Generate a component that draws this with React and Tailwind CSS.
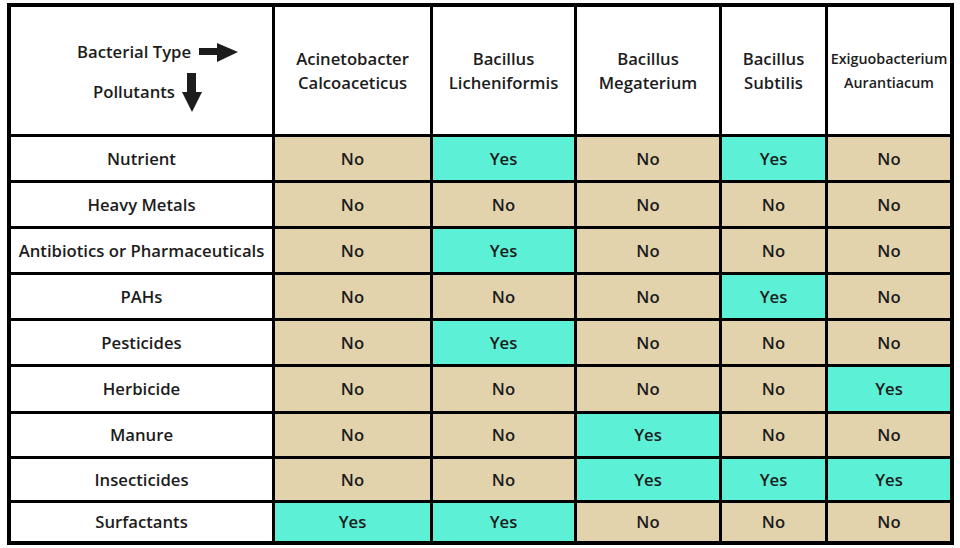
import React from "react";

const cols = [
  ["Acinetobacter", "Calcoaceticus"],
  ["Bacillus", "Licheniformis"],
  ["Bacillus", "Megaterium"],
  ["Bacillus", "Subtilis"],
  ["Exiguobacterium", "Aurantiacum"],
];

const rows = [
  ["Nutrient", [0, 1, 0, 1, 0]],
  ["Heavy Metals", [0, 0, 0, 0, 0]],
  ["Antibiotics or Pharmaceuticals", [0, 1, 0, 0, 0]],
  ["PAHs", [0, 0, 0, 1, 0]],
  ["Pesticides", [0, 1, 0, 0, 0]],
  ["Herbicide", [0, 0, 0, 0, 1]],
  ["Manure", [0, 0, 1, 0, 0]],
  ["Insecticides", [0, 0, 1, 1, 1]],
  ["Surfactants", [1, 1, 0, 0, 0]],
];

function RightArrow() {
  return (
    <svg width="39" height="19" viewBox="0 0 39 19" className="shrink-0">
      <rect x="0" y="5" width="19" height="7" fill="#1c1c1c" />
      <polygon points="18,0 39,9 18,19" fill="#1c1c1c" />
    </svg>
  );
}

function DownArrow() {
  return (
    <svg width="20" height="39" viewBox="0 0 20 39" className="shrink-0">
      <rect x="5" y="0" width="9" height="20" fill="#1c1c1c" />
      <polygon points="0,19 20,19 10,39" fill="#1c1c1c" />
    </svg>
  );
}

export default function App() {
  return (
    <div
      className="w-[960px] h-[548px] bg-white pt-[3px] pl-[7px] text-[#1c1c1c] font-semibold"
      style={{ fontFamily: '"Open Sans", "Noto Sans", sans-serif' }}
    >
      <div className="grid w-[947px] grid-cols-[261px_155px_141px_142px_103px_122px] grid-rows-[127px_43px_43px_43px_43px_43px_44px_42px_41px_38px] gap-[3px] bg-black p-[4px]">
        <div className="bg-white flex flex-col items-start pt-[36px] text-[16.7px] leading-[24px]">
          <div className="flex items-center gap-[8px] ml-[66px] h-[19px]">
            <span className="-mt-[2px]">Bacterial Type</span>
            <RightArrow />
          </div>
          <div className="flex items-start gap-[7px] ml-[82px] mt-[11px]">
            <span className="mt-[7px]">Pollutants</span>
            <DownArrow />
          </div>
        </div>
        {cols.map((c, i) => (
          <div
            key={i}
            className={`bg-white flex flex-col items-center justify-center text-center ${
              i === 4 ? "text-[14.3px] leading-[24px]" : "text-[16.7px] leading-[24px]"
            }`}
          >
            <span>{c[0]}</span>
            <span>{c[1]}</span>
          </div>
        ))}
        {rows.map(([name, vals]) => (
          <React.Fragment key={name}>
            <div className="bg-white flex items-center justify-center text-[16.7px]">{name}</div>
            {vals.map((v, j) => (
              <div
                key={j}
                className={`flex items-center justify-center text-[16.7px] ${
                  v ? "bg-[#5cf0d6]" : "bg-[#e2d3ad]"
                }`}
              >
                {v ? "Yes" : "No"}
              </div>
            ))}
          </React.Fragment>
        ))}
      </div>
    </div>
  );
}
